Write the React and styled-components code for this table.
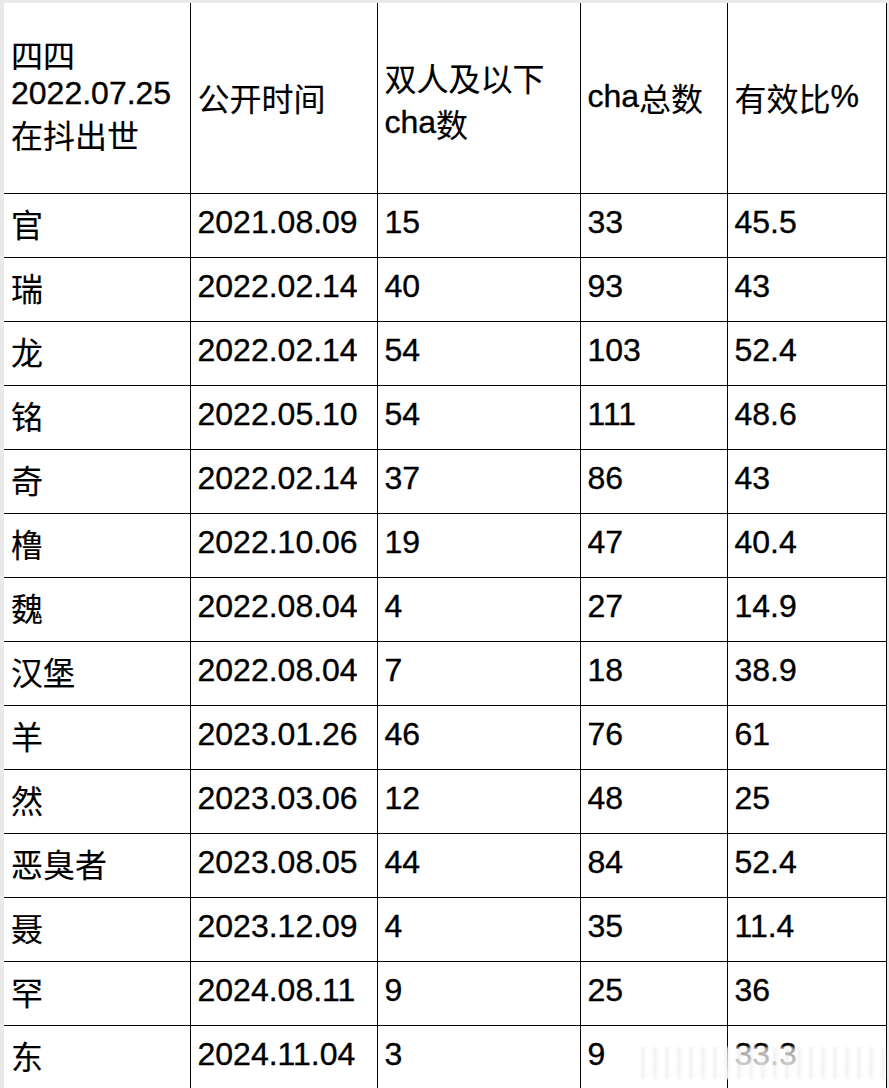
import React from "react";
import styled, { createGlobalStyle } from "styled-components";

const Global = createGlobalStyle`
  html, body { margin: 0; padding: 0; }
  body {
    background: #e9e9e9;
    font-family: "Liberation Sans", Arial, "Noto Sans CJK SC", sans-serif;
    color: #000;
  }
`;

const Page = styled.div`
  position: relative;
  width: 889px;
  height: 1088px;
  overflow: hidden;
  padding: 3px 0 0 4px;
  box-sizing: border-box;
`;

const Table = styled.table`
  border-collapse: collapse;
  table-layout: fixed;
  width: 882px;
  background: #fff;
  font-size: 32px;
  -webkit-text-stroke: 0.35px #000;
`;

const HeadRow = styled.tr`
  height: 190px;
`;

const Row = styled.tr`
  height: 64px;
`;

const Cell = styled.td`
  border-left: ${(p) => (p.$first ? "none" : "1px solid #000")};
  border-right: 1px solid #000;
  border-top: ${(p) => (p.$head ? "none" : "1px solid #000")};
  padding: ${(p) => p.$pt || 0}px 4px ${(p) => (p.$pb != null ? p.$pb : 6)}px 7px;
  vertical-align: middle;
  line-height: ${(p) => p.$lh || 38}px;
  white-space: nowrap;
  overflow: hidden;
`;

const Han = styled.span`
  line-height: 30px;
  vertical-align: -4px;
  -webkit-text-stroke: 0.15px #000;
`;

const Watermark = styled.div`
  position: absolute;
  left: 640px;
  top: 1047px;
  width: 245px;
  height: 32px;
  background:
    repeating-linear-gradient(
      90deg,
      rgba(255, 255, 255, 0) 0px,
      rgba(210, 210, 210, 0.35) 3px,
      rgba(255, 255, 255, 0) 6px,
      rgba(255, 255, 255, 0) 12px
    ),
    linear-gradient(180deg, rgba(255, 255, 255, 0.6), rgba(255, 255, 255, 0.95));
  filter: blur(1px);
`;

const CJK = /([\u3400-\u9fff]+)/;

function Txt({ children }) {
  return String(children)
    .split(CJK)
    .filter(Boolean)
    .map((part, i) =>
      CJK.test(part) ? <Han key={i}>{part}</Han> : <React.Fragment key={i}>{part}</React.Fragment>
    );
}

const rows = [
  ["官", "2021.08.09", "15", "33", "45.5"],
  ["瑞", "2022.02.14", "40", "93", "43"],
  ["龙", "2022.02.14", "54", "103", "52.4"],
  ["铭", "2022.05.10", "54", "111", "48.6"],
  ["奇", "2022.02.14", "37", "86", "43"],
  ["橹", "2022.10.06", "19", "47", "40.4"],
  ["魏", "2022.08.04", "4", "27", "14.9"],
  ["汉堡", "2022.08.04", "7", "18", "38.9"],
  ["羊", "2023.01.26", "46", "76", "61"],
  ["然", "2023.03.06", "12", "48", "25"],
  ["恶臭者", "2023.08.05", "44", "84", "52.4"],
  ["聂", "2023.12.09", "4", "35", "11.4"],
  ["罕", "2024.08.11", "9", "25", "36"],
  ["东", "2024.11.04", "3", "9", "33.3"],
];

export default function App() {
  return (
    <Page>
      <Global />
      <Table>
        <colgroup>
          <col style={{ width: 186 }} />
          <col style={{ width: 187 }} />
          <col style={{ width: 203 }} />
          <col style={{ width: 147 }} />
          <col style={{ width: 159 }} />
        </colgroup>
        <tbody>
          <HeadRow>
            <Cell $head $first $lh={40} $pb={9}>
              <Txt>四四</Txt>
              <br />
              2022.07.25
              <br />
              <Txt>在抖出世</Txt>
            </Cell>
            <Cell $head $pb={4}>
              <Txt>公开时间</Txt>
            </Cell>
            <Cell $head $lh={46} $pt={2} $pb={0}>
              <Txt>双人及以下</Txt>
              <br />
              <Txt>cha数</Txt>
            </Cell>
            <Cell $head $pb={4}>
              <Txt>cha总数</Txt>
            </Cell>
            <Cell $head $pb={4}>
              <Txt>有效比%</Txt>
            </Cell>
          </HeadRow>
          {rows.map((r, i) => (
            <Row key={i}>
              {r.map((v, j) => (
                <Cell key={j} $first={j === 0}>
                  <Txt>{v}</Txt>
                </Cell>
              ))}
            </Row>
          ))}
        </tbody>
      </Table>
      <Watermark />
    </Page>
  );
}
